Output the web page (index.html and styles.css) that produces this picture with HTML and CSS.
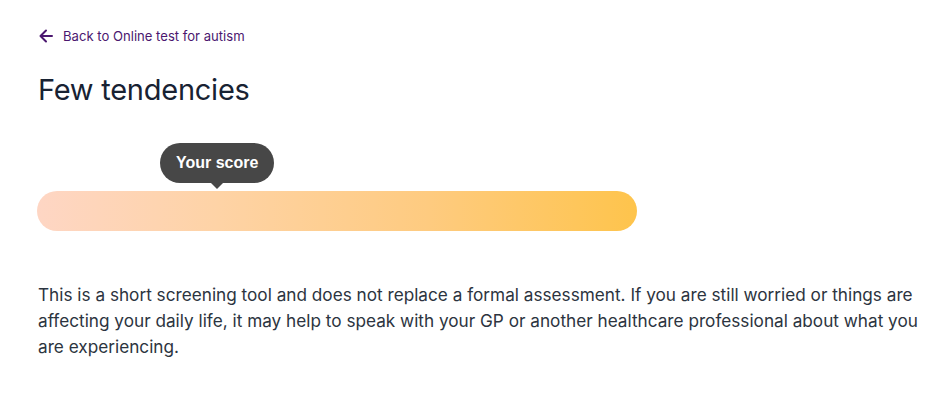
FILE: index.html
```html
<!DOCTYPE html>
<html lang="en">
<head>
<meta charset="utf-8">
<title>Few tendencies</title>
<link rel="stylesheet" href="styles.css">
</head>
<body>
<main class="page">
  <a class="back-link" href="#">
    <svg class="back-icon" width="14" height="14" viewBox="0 0 14 14" aria-hidden="true">
      <path d="M13 7H1.8M7 1.5L1.5 7L7 12.5" fill="none" stroke="currentColor" stroke-width="2" stroke-linecap="round" stroke-linejoin="round"/>
    </svg>
    <span>Back to Online test for autism</span>
  </a>
  <h1 class="title">Few tendencies</h1>
  <div class="score">
    <div class="score-marker">
      <div class="tooltip">Your score</div>
    </div>
    <div class="bar"></div>
  </div>
  <p class="body-text">This is a short screening tool and does not replace a formal assessment. If you are still worried or things are affecting your daily life, it may help to speak with your GP or another healthcare professional about what you are experiencing.</p>
</main>
</body>
</html>
```

FILE: styles.css
```css
html, body {
  margin: 0;
  padding: 0;
  background: #ffffff;
}
body {
  font-family: Inter, "Noto Sans", sans-serif;
  color: #1f2733;
}
.page {
  padding: 27px 20px 0 38px;
}
.back-link {
  display: inline-flex;
  align-items: center;
  gap: 10px;
  color: #4b176f;
  text-decoration: none;
  font-size: 13.1px;
  line-height: 18px;
}
.back-icon {
  display: block;
  margin-left: 1px;
}
.title {
  margin: 25px 0 0 0;
  font-size: 29px;
  font-weight: 400;
  line-height: 36px;
  color: #182233;
  letter-spacing: -0.25px;
}
.score {
  margin-top: 35px;
  width: 600px;
  margin-left: -1px;
}
.score-marker {
  display: flex;
  padding-left: 123px;
}
.tooltip {
  position: relative;
  background: #474747;
  color: #ffffff;
  font-family: "Liberation Sans", Arial, sans-serif;
  font-weight: 700;
  font-size: 16px;
  line-height: 40px;
  height: 40px;
  padding: 0 16px;
  border-radius: 20px;
}
.tooltip::after {
  content: "";
  position: absolute;
  left: 50%;
  bottom: -6px;
  margin-left: -6px;
  border-left: 6px solid transparent;
  border-right: 6px solid transparent;
  border-top: 6px solid #474747;
}
.bar {
  margin-top: 8px;
  height: 40px;
  border-radius: 20px;
  background: linear-gradient(90deg, #fed6c4 0%, #fed3a6 30%, #fecb80 65%, #fec44c 100%);
}
.body-text {
  margin: 51px 0 0 0;
  font-size: 17.2px;
  line-height: 26px;
  color: #2c3440;
  max-width: 890px;
}
```
